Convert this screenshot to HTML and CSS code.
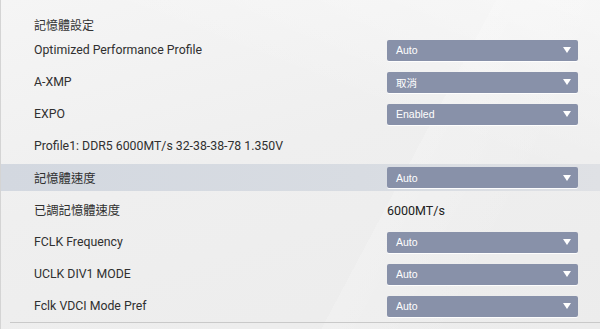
FILE: index.html
```html
<!DOCTYPE html>
<html lang="zh-Hant">
<head>
    <meta charset="UTF-8">
    <meta name="viewport" content="width=device-width, initial-scale=1.0">
    <title>記憶體設定</title>
    <link rel="stylesheet" href="styles.css">
</head>
<body>
    <div class="screen">
        <div class="group-title">記憶體設定</div>

        <div class="row">
            <span class="label">Optimized Performance Profile</span>
            <div class="select"><span>Auto</span><i class="arrow"></i></div>
        </div>
        <div class="row">
            <span class="label">A-XMP</span>
            <div class="select"><span>取消</span><i class="arrow"></i></div>
        </div>
        <div class="row">
            <span class="label">EXPO</span>
            <div class="select"><span>Enabled</span><i class="arrow"></i></div>
        </div>
        <div class="row">
            <span class="label">Profile1: DDR5 6000MT/s 32-38-38-78 1.350V</span>
        </div>

        <!-- selected item -->
        <div class="row row-active">
            <span class="label">記憶體速度</span>
            <div class="select"><span>Auto</span><i class="arrow"></i></div>
        </div>
        <div class="row">
            <span class="label">已調記憶體速度</span>
            <span class="value">6000MT/s</span>
        </div>
        <div class="row">
            <span class="label">FCLK Frequency</span>
            <div class="select"><span>Auto</span><i class="arrow"></i></div>
        </div>
        <div class="row">
            <span class="label">UCLK DIV1 MODE</span>
            <div class="select"><span>Auto</span><i class="arrow"></i></div>
        </div>
        <div class="row">
            <span class="label">Fclk VDCI Mode Pref</span>
            <div class="select"><span>Auto</span><i class="arrow"></i></div>
        </div>

        <div class="divider"></div>
    </div>
</body>
</html>
```

FILE: styles.css
```css
html, body {
    margin: 0;
    height: 100%;
}
body {
    font-family: Roboto, "Noto Sans CJK TC", sans-serif;
    color: #303030;
    background: #eeeeee;
    overflow: hidden;
}
.screen {
    height: 100%;
    border-left: 1px solid #d4d4d4;
    background:
        linear-gradient(118deg, transparent 64%, rgba(255,255,255,0.18) 64%, transparent 82%),
        linear-gradient(200deg, rgba(255,255,255,0.45) 0%, transparent 35%),
        linear-gradient(165deg, #f5f5f5 0%, #efefef 45%, #ececec 100%);
}
.group-title {
    box-sizing: border-box;
    height: 34px;
    padding: 16px 0 0 33px;
    font-size: 12px;
    line-height: 20px;
    color: #333;
}
.row {
    display: grid;
    grid-template-columns: 1fr 191px;
    align-items: center;
    height: 32px;
    padding: 0 22px 0 33px;
    font-size: 12.3px;
}
.row-active {
    height: 27px;
    margin: 2px 0 3px;
    background: linear-gradient(90deg, #d3d8e0 0%, #d8dce2 60%, #dfe1e5 100%);
}
.label {
    white-space: nowrap;
}
.value {
    font-size: 12.5px;
    color: #222;
}
.select {
    display: flex;
    align-items: center;
    height: 21px;
    padding-left: 9px;
    border-radius: 2px;
    background: #8891a9;
    box-shadow: 0 1px 0 rgba(255,255,255,0.9);
    color: #fff;
    font-family: "Liberation Sans", "Noto Sans CJK TC", sans-serif;
    font-size: 10.5px;
}
.arrow {
    margin-left: auto;
    margin-right: 7px;
    width: 0;
    height: 0;
    border-left: 4px solid transparent;
    border-right: 4px solid transparent;
    border-top: 6px solid #fff;
}
.divider {
    border-top: 1px solid #c9c9c9;
    margin-left: 9px;
}
```
